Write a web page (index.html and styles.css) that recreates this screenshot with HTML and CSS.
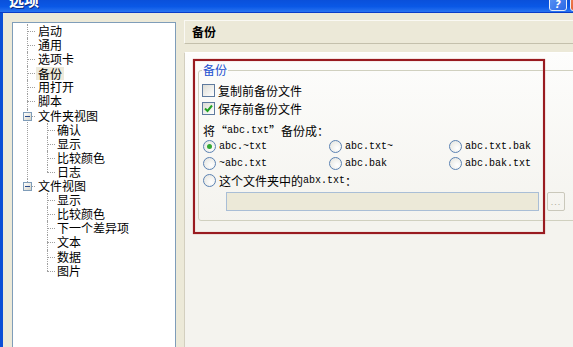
FILE: index.html
```html
<!DOCTYPE html>
<html lang="zh-CN">
<head>
<meta charset="utf-8">
<title>选项</title>
<link rel="stylesheet" href="styles.css">
</head>
<body>
<div class="window">
  <div class="titlebar">
    <span class="title">选项</span>
    <span class="tb-buttons"><span class="help">?</span><span class="close"></span></span>
  </div>
  <div class="main">
    <div class="tree">
      <ul class="lvl1">
        <li>启动</li>
        <li>通用</li>
        <li>选项卡</li>
        <li><span class="sel">备份</span></li>
        <li>用打开</li>
        <li>脚本</li>
        <li><span class="toggle"></span>文件夹视图
          <ul class="lvl2">
            <li>确认</li>
            <li>显示</li>
            <li>比较颜色</li>
            <li>日志</li>
          </ul>
        </li>
        <li><span class="toggle"></span>文件视图
          <ul class="lvl2">
            <li>显示</li>
            <li>比较颜色</li>
            <li>下一个差异项</li>
            <li>文本</li>
            <li>数据</li>
            <li>图片</li>
          </ul>
        </li>
      </ul>
    </div>
    <div class="right">
      <div class="header">备份</div>
      <div class="panel">
        <fieldset class="group">
          <legend>备份</legend>
          <label class="check"><span class="cb"></span>复制前备份文件</label>
          <label class="check"><span class="cb"><svg width="9" height="9" viewBox="0 0 9 9"><path d="M1 4.5 L3.5 7 L8 1.5" fill="none" stroke="#22A222" stroke-width="2"/></svg></span>保存前备份文件</label>
          <div class="prompt">将“<span class="mono">abc.txt</span>”备份成：</div>
          <div class="radios">
            <label class="radio"><span class="rb on"></span><span class="mono">abc.~txt</span></label>
            <label class="radio"><span class="rb"></span><span class="mono">abc.txt~</span></label>
            <label class="radio"><span class="rb"></span><span class="mono">abc.txt.bak</span></label>
            <label class="radio"><span class="rb"></span><span class="mono">~abc.txt</span></label>
            <label class="radio"><span class="rb"></span><span class="mono">abc.bak</span></label>
            <label class="radio"><span class="rb"></span><span class="mono">abc.bak.txt</span></label>
            <label class="radio span3"><span class="rb"></span>这个文件夹中的<span class="mono">abx.txt</span>：</label>
          </div>
          <div class="pathrow"><div class="path"></div><div class="browse">...</div></div>
        </fieldset>
      </div>
    </div>
  </div>
  <div class="annot"></div>
</div>
</body>
</html>
```
FILE: styles.css
```css
body {
  margin: 0;
  width: 573px;
  height: 347px;
  overflow: hidden;
  font-family: "Noto Sans CJK SC", sans-serif;
  font-size: 12px;
  color: #000;
  background: #ECE9D8;
}
.window {
  position: relative;
  height: 347px;
  display: flex;
  flex-direction: column;
}
.titlebar {
  height: 13px;
  flex: none;
  box-sizing: border-box;
  display: flex;
  justify-content: space-between;
  overflow: hidden;
  background: linear-gradient(#0A50DA, #0A58E6 55%, #2A74F0);
  border-bottom: 1px solid #0A3CC8;
}
.title {
  color: #fff;
  font-weight: bold;
  font-size: 15px;
  line-height: 15px;
  margin: -8px 0 0 9px;
  text-shadow: 1px 1px #0A2A80;
}
.tb-buttons {
  display: flex;
  gap: 3px;
  margin-right: -15px;
}
.help, .close {
  width: 18px;
  height: 15px;
  box-sizing: border-box;
  margin-top: -4px;
  border: 1px solid #E8EEF8;
  border-radius: 3px;
}
.help {
  background: linear-gradient(135deg, #5A94F4, #2A66E6);
  color: #fff;
  font: bold italic 10px "DejaVu Sans", sans-serif;
  line-height: 15px;
  text-align: center;
}
.close {
  background: linear-gradient(135deg, #F08050, #D8461E);
}
.main {
  flex: 1;
  min-height: 0;
  display: flex;
  border-left: 3px solid #0B4FD6;
  background: #ECE9D8;
}
.tree {
  width: 164px;
  flex: none;
  box-sizing: border-box;
  margin: 9px 0 -2px 9px;
  border: 1px solid #7F9DB9;
  background: #fff;
  padding-top: 1px;
}
.tree ul {
  list-style: none;
  margin: 0;
  padding: 0;
}
.tree li {
  position: relative;
  line-height: 14.1px;
  white-space: nowrap;
}
.tree li::before {
  content: "";
  position: absolute;
  top: 7px;
  width: 8px;
  border-top: 1px dotted #A0A0A0;
}
.tree li::after {
  content: "";
  position: absolute;
  top: 0;
  bottom: 0;
  border-left: 1px dotted #A0A0A0;
}
.tree li:last-child::after {
  bottom: auto;
  height: 7px;
}
.lvl1 > li { padding-left: 25px; }
.lvl1 > li::before, .lvl1 > li::after { left: 14px; }
.lvl2 > li { padding-left: 19px; }
.lvl2 > li::before, .lvl2 > li::after { left: 9px; }
.toggle {
  position: absolute;
  left: 10px;
  top: 3px;
  width: 9px;
  height: 9px;
  box-sizing: border-box;
  border: 1px solid #7F9DB9;
  background: linear-gradient(135deg, #fff, #D6D3C6);
  z-index: 1;
  display: flex;
  align-items: center;
  justify-content: center;
}
.toggle::after {
  content: "";
  width: 5px;
  height: 1px;
  background: #2B4A8A;
}
.sel {
  display: inline-block;
  vertical-align: top;
  line-height: 13px;
  margin: 1px 0 0 -2px;
  padding: 0 2px;
  background: #EDEADC;
}
.right {
  flex: 1;
  min-width: 0;
  margin-left: 8px;
  display: flex;
  flex-direction: column;
}
.header {
  flex: none;
  height: 24px;
  box-sizing: border-box;
  margin-top: 7px;
  border-top: 1px solid #FAF9F4;
  border-left: 1px solid #FAF9F4;
  border-bottom: 1px solid #C4C0AC;
  padding-left: 7px;
  font-weight: bold;
  line-height: 22px;
}
.panel {
  flex: 1;
  margin-top: 8px;
  border-top: 1px solid #fff;
  border-left: 1px solid #D3CFBF;
  background: linear-gradient(#FDFDFC, #F4F3EE 170px);
}
.group {
  margin: 10px -12px 0 13px;
  padding: 4px 0 9px 4px;
  border: 1px solid #D0D0BF;
  border-radius: 3px;
  min-width: 0;
}
.group legend {
  padding: 0 1px;
  margin-left: -1px;
  color: #1A4FD0;
  line-height: 14px;
}
.check {
  display: flex;
  align-items: center;
  height: 18px;
}
.cb {
  width: 13px;
  height: 13px;
  flex: none;
  box-sizing: border-box;
  border: 1px solid #5E7A9E;
  background: linear-gradient(135deg, #DCDCD5, #fff);
  margin: 0 3px 0 -1px;
  display: flex;
  align-items: center;
  justify-content: center;
}
.prompt {
  margin-top: 5px;
  height: 16px;
  display: flex;
  align-items: center;
}
.radios {
  display: grid;
  grid-template-columns: 126px 120px 1fr;
  grid-auto-rows: 17px;
}
.radio {
  display: flex;
  align-items: center;
  white-space: nowrap;
}
.span3 { grid-column: 1 / -1; }
.rb {
  width: 13px;
  height: 13px;
  flex: none;
  box-sizing: border-box;
  border: 1px solid #5B82B3;
  border-radius: 50%;
  background: radial-gradient(circle at 65% 65%, #fff, #E2E2DC);
  margin-right: 3px;
  display: flex;
  align-items: center;
  justify-content: center;
}
.rb.on::after {
  content: "";
  width: 5px;
  height: 5px;
  border-radius: 50%;
  background: #34A834;
}
.mono {
  font-family: "Liberation Mono", monospace;
  font-size: 10px;
}
.pathrow {
  display: flex;
  gap: 8px;
  margin-top: 3px;
  padding-left: 23px;
}
.path {
  width: 313px;
  height: 19px;
  box-sizing: border-box;
  border: 1px solid #A9BED6;
  background: #ECE9D8;
}
.browse {
  width: 18px;
  height: 19px;
  box-sizing: border-box;
  border: 1px solid #CAC8BB;
  border-radius: 2px;
  color: #ACA899;
  font: 9px "Liberation Sans", sans-serif;
  line-height: 19px;
  text-align: center;
  letter-spacing: 1px;
}
.annot {
  position: absolute;
  left: 193px;
  top: 59px;
  width: 352px;
  height: 175px;
  box-sizing: border-box;
  border: 2px solid #991B20;
  box-shadow: 0 0 1px #C46A6A, inset 0 0 1px #C46A6A;
  pointer-events: none;
}
```
